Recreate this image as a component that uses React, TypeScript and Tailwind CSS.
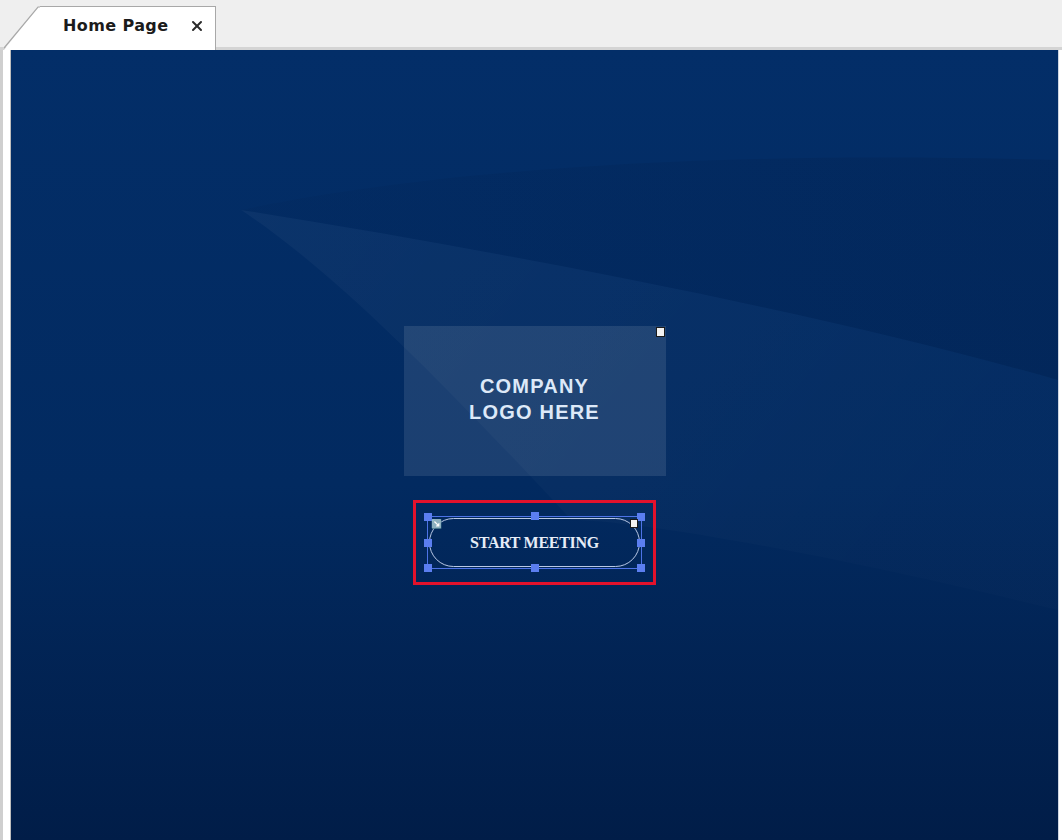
import { X } from 'lucide-react'

// selection handles around the selected button, in px relative to its frame
const handles = [
  'left-[-4px] top-[-4px]',
  'left-[103px] top-[-5px]',
  'right-[-4px] top-[-4px]',
  'left-[-4px] top-[22px]',
  'right-[-4px] top-[22px]',
  'left-[-4px] bottom-[-4px]',
  'left-[103px] bottom-[-4px]',
  'right-[-4px] bottom-[-4px]',
]

function TabBar() {
  return (
    <div className="relative h-[50px] shrink-0 border-b-[3px] border-[#d4d4d4] bg-[#efefef]">
      <div className="absolute bottom-[-3px] left-[4px] flex h-[44px] w-[212px]">
        <svg width="36" height="44" className="shrink-0">
          <path d="M0 44 L34 1 L36 1 L36 44 Z" fill="#ffffff" />
          <path d="M0 42 L34 1 L36 1" fill="none" stroke="#a8a8a8" strokeWidth="1.2" />
        </svg>
        <div className="flex flex-1 items-center border-r border-t border-[#a8a8a8] bg-white pl-[23px] pb-[5px]">
          <span className="text-[16px] font-bold tracking-[0.4px] text-[#1b1b1b] [font-family:'DejaVu_Sans',sans-serif]">Home Page</span>
          <X className="ml-[21px] h-[16px] w-[16px] text-[#2a2a2a]" strokeWidth={3} />
        </div>
      </div>
    </div>
  )
}

function Backdrop() {
  return (
    <svg className="absolute inset-0 h-full w-full" viewBox="0 0 1046 790" preserveAspectRatio="none">
      <defs>
        <linearGradient id="base" x1="0" y1="0" x2="0" y2="1">
          <stop offset="0" stopColor="#032e68" />
          <stop offset="0.55" stopColor="#022a60" />
          <stop offset="1" stopColor="#011d48" />
        </linearGradient>
        <linearGradient id="streak" x1="0" y1="0" x2="1" y2="0.4">
          <stop offset="0" stopColor="#ffffff" stopOpacity="0.035" />
          <stop offset="0.6" stopColor="#ffffff" stopOpacity="0.02" />
          <stop offset="1" stopColor="#ffffff" stopOpacity="0.01" />
        </linearGradient>
        <linearGradient id="shade" x1="0" y1="0" x2="1" y2="0">
          <stop offset="0" stopColor="#000a24" stopOpacity="0.04" />
          <stop offset="1" stopColor="#000a24" stopOpacity="0.12" />
        </linearGradient>
      </defs>
      <rect width="1046" height="790" fill="url(#base)" />
      {/* dark band above the light streak */}
      <path d="M230 160 C 420 120, 700 100, 1046 110 L 1046 330 C 800 260, 480 200, 230 160 Z" fill="url(#shade)" />
      {/* light streak fanning out from the upper left */}
      <path d="M230 160 C 480 200, 800 260, 1046 330 L 1046 560 C 800 500, 620 470, 560 470 C 420 320, 320 220, 230 160 Z" fill="url(#streak)" />
    </svg>
  )
}

function LogoPlaceholder() {
  return (
    <div className="relative flex h-[150px] w-[262px] items-center justify-center bg-white/10 pb-[5px]">
      <p className="text-center text-[20px] font-bold leading-[26px] tracking-[1.2px] text-[#dde9f8] [font-family:'Liberation_Sans',Arial,sans-serif]">
        COMPANY
        <br />
        LOGO HERE
      </p>
      <span className="absolute right-[1px] top-[1px] h-[10px] w-[9px] border border-[#1a1a1a] bg-[#f2f2f2]" />
    </div>
  )
}

function StartMeetingButton() {
  return (
    <div className="flex h-[85px] w-[243px] items-center justify-center border-[3px] border-[#e3122c]">
      <div className="relative h-[53px] w-[215px] border border-[#4d73e6]">
        <div className="absolute inset-[1px] flex items-center justify-center rounded-[26px] border border-[#b9c8e6]">
          <span className="text-[16px] font-bold tracking-[-0.3px] text-[#e6ecf7] [font-family:'Liberation_Serif','Times_New_Roman',serif]">START MEETING</span>
        </div>
        {handles.map((pos) => (
          <span key={pos} className={`absolute h-[8px] w-[8px] bg-[#5b7ef0] ${pos}`} />
        ))}
        <span className="absolute right-[3px] top-[2px] h-[9px] w-[8px] border border-[#1a1a1a] bg-[#f2f2f2]" />
        <span className="absolute left-[3px] top-[2px] text-[9px] leading-none text-[#dfe6f5]">↘</span>
      </div>
    </div>
  )
}

export default function App() {
  return (
    <div className="flex h-[840px] w-[1062px] flex-col overflow-hidden bg-[#efefef]">
      <TabBar />
      <div className="flex flex-1">
        <div className="w-[11px] shrink-0 border-l-[3px] border-r border-l-[#cfcfcf] border-r-[#bdbdbd] bg-white" />
        <div className="relative flex-1 overflow-hidden">
          <Backdrop />
          <div className="relative flex flex-col items-center pt-[276px]">
            <LogoPlaceholder />
            <div className="mt-[24px]">
              <StartMeetingButton />
            </div>
          </div>
        </div>
        <div className="w-[4px] shrink-0 border-l border-[#cfd6e2] bg-white" />
      </div>
    </div>
  )
}
